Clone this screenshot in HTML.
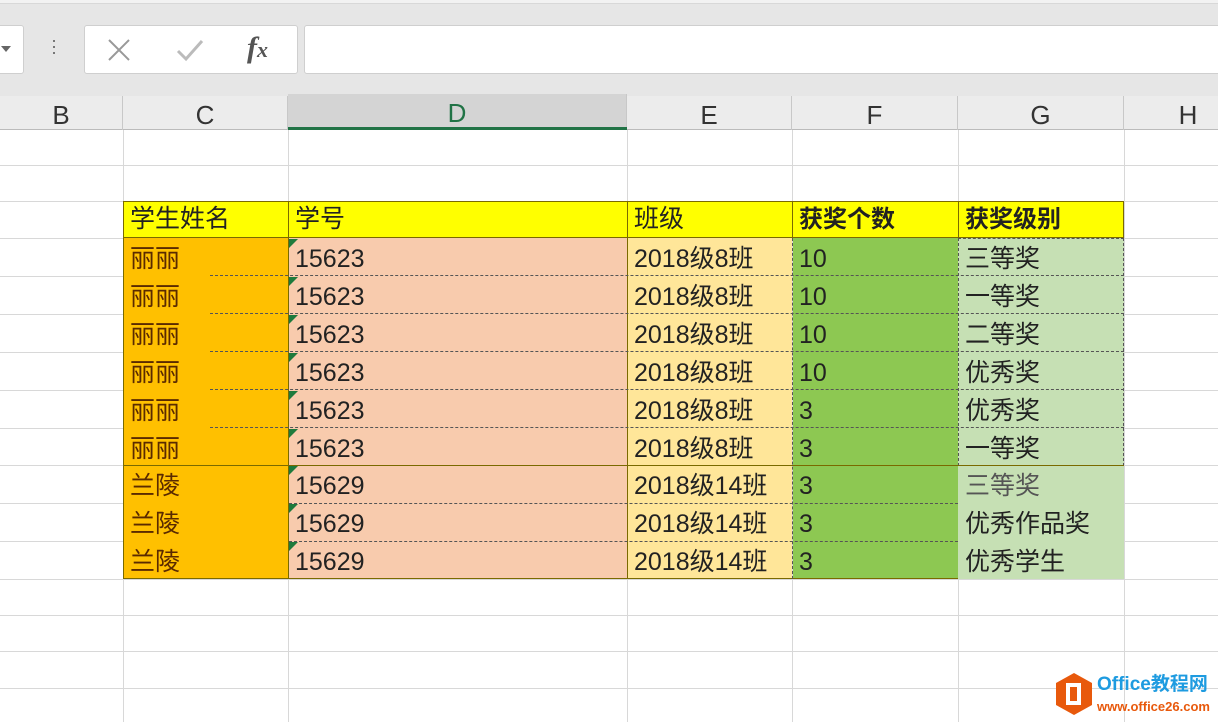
<!DOCTYPE html>
<html><head><meta charset="utf-8"><style>
*{margin:0;padding:0;box-sizing:border-box}
body{width:1218px;height:722px;overflow:hidden;background:#fff;position:relative;font-family:"Liberation Sans","Noto Sans CJK SC",sans-serif;color:#222}
.a{position:absolute}
.hl{position:absolute;left:0;width:1218px;height:1px;background:#d8d8d8}
.vl{position:absolute;top:130px;width:1px;height:592px;background:#d8d8d8}
.c{position:absolute;font-size:25px;line-height:41px;padding-left:7px;white-space:nowrap;overflow:hidden}
.ch{position:absolute;top:96px;height:34px;line-height:38px;text-align:center;font-size:26px;color:#333;border-right:1px solid #c8c8c8}
.tri{position:absolute;left:0;top:0;width:0;height:0;border-top:9px solid #1e7a3c;border-right:9px solid transparent}
</style></head><body>
<div class="a" style="left:0;top:0;width:1218px;height:96px;background:#e6e6e6"></div>
<div class="a" style="left:0;top:0;width:1218px;height:4px;background:#f2f2f2;border-bottom:1px solid #d8d8d8"></div>
<div class="a" style="left:-5px;top:25px;width:29px;height:49px;background:#fff;border:1px solid #cfcfcf;border-radius:3px"></div>
<div class="a" style="left:1px;top:46px;width:0;height:0;border-left:5px solid transparent;border-right:5px solid transparent;border-top:6px solid #666"></div>
<div class="a" style="left:53px;top:40px;width:2px;height:2px;background:#777;box-shadow:0 6px 0 #777,0 12px 0 #777"></div>
<div class="a" style="left:84px;top:25px;width:214px;height:49px;background:#fff;border:1px solid #cfcfcf;border-radius:3px"></div>
<svg class="a" style="left:107px;top:38px" width="24" height="24"><path d="M2 2L22 22M22 2L2 22" stroke="#999" stroke-width="2"/></svg>
<svg class="a" style="left:176px;top:38px" width="28" height="24"><path d="M2 13L10 21L26 3" stroke="#bbb" stroke-width="3" fill="none"/></svg>
<div class="a" style="left:247px;top:30px;font-size:30px;color:#555;font-style:italic;font-family:'Liberation Serif',serif;line-height:36px;font-weight:bold">f<span style="font-size:22px">x</span></div>
<div class="a" style="left:304px;top:25px;width:930px;height:49px;background:#fff;border:1px solid #cfcfcf;border-radius:3px"></div>
<div class="a" style="left:0;top:96px;width:1218px;height:34px;background:#ececec;border-bottom:1px solid #bbb"></div>
<div class="a" style="left:288px;top:94px;width:339px;height:36px;background:#d4d4d4;border-bottom:3px solid #217346"></div>
<div class="ch" style="left:0;width:123px">B</div>
<div class="ch" style="left:123px;width:165px">C</div>
<div class="ch" style="left:288px;width:339px;color:#217346;top:94px;height:33px">D</div>
<div class="ch" style="left:627px;width:165px">E</div>
<div class="ch" style="left:792px;width:166px">F</div>
<div class="ch" style="left:958px;width:166px">G</div>
<div class="ch" style="left:1124px;width:128px;border:none">H</div>
<div class="hl" style="top:165px"></div><div class="hl" style="top:201px"></div>
<div class="hl" style="top:238px"></div><div class="hl" style="top:276px"></div><div class="hl" style="top:314px"></div><div class="hl" style="top:352px"></div><div class="hl" style="top:390px"></div><div class="hl" style="top:428px"></div><div class="hl" style="top:465px"></div><div class="hl" style="top:503px"></div><div class="hl" style="top:541px"></div>
<div class="hl" style="top:579px"></div><div class="hl" style="top:615px"></div><div class="hl" style="top:651px"></div><div class="hl" style="top:688px"></div>
<div class="vl" style="left:123px"></div><div class="vl" style="left:288px"></div><div class="vl" style="left:627px"></div><div class="vl" style="left:792px"></div><div class="vl" style="left:958px"></div><div class="vl" style="left:1124px"></div>
<div class="a" style="left:123px;top:201px;width:1001px;height:37px;background:#ffff00;border:1px solid #7a6a00"></div>
<div class="a" style="left:288px;top:201px;width:1px;height:378px;background:#7a6a00"></div>
<div class="a" style="left:627px;top:201px;width:1px;height:378px;background:#7a6a00"></div>
<div class="a" style="left:792px;top:201px;width:1px;height:37px;background:#7a6a00"></div>
<div class="a" style="left:958px;top:201px;width:1px;height:37px;background:#7a6a00"></div>
<div class="c" style="left:123px;top:199px">学生姓名</div>
<div class="c" style="left:288px;top:199px">学号</div>
<div class="c" style="left:627px;top:199px">班级</div>
<div class="c" style="left:792px;top:199px;font-weight:bold;font-size:24px">获奖个数</div>
<div class="c" style="left:958px;top:199px;font-weight:bold;font-size:24px">获奖级别</div>
<div class="a" style="left:124px;top:238px;width:164px;height:341px;background:#ffc000"></div>
<div class="a" style="left:289px;top:238px;width:338px;height:341px;background:#f8cbad"></div>
<div class="a" style="left:628px;top:238px;width:164px;height:341px;background:#ffe699"></div>
<div class="a" style="left:793px;top:238px;width:165px;height:341px;background:#8dc852"></div>
<div class="a" style="left:958px;top:238px;width:166px;height:341px;background:#c6e0b4"></div>
<div class="a" style="left:123px;top:238px;width:1px;height:341px;background:#7a6a00"></div>
<div class="a" style="left:123px;top:578px;width:835px;height:1px;background:#7a6a00"></div>
<div class="a" style="left:958px;top:238px;width:166px;height:228px;border:1px dashed #555"></div>
<div class="a" style="left:792px;top:238px;width:0;height:341px;border-left:1px dashed #555"></div>
<div class="a" style="left:210px;top:275px;width:914px;border-top:1px dashed #555"></div>
<div class="a" style="left:210px;top:313px;width:914px;border-top:1px dashed #555"></div>
<div class="a" style="left:210px;top:351px;width:914px;border-top:1px dashed #555"></div>
<div class="a" style="left:210px;top:389px;width:914px;border-top:1px dashed #555"></div>
<div class="a" style="left:210px;top:427px;width:914px;border-top:1px dashed #555"></div>
<div class="a" style="left:124px;top:465px;width:1000px;border-top:1px solid #7a6a00"></div>
<div class="a" style="left:289px;top:503px;width:669px;border-top:1px dashed #555"></div>
<div class="a" style="left:289px;top:541px;width:669px;border-top:1px dashed #555"></div>
<div class="c" style="left:123px;top:239px;color:#5a2a00">丽丽</div><div class="a" style="left:289px;top:239px"><div class="tri"></div></div><div class="c" style="left:288px;top:239px">15623</div><div class="c" style="left:627px;top:239px">2018级8班</div><div class="c" style="left:792px;top:239px">10</div><div class="c" style="left:958px;top:239px">三等奖</div>
<div class="c" style="left:123px;top:277px;color:#5a2a00">丽丽</div><div class="a" style="left:289px;top:277px"><div class="tri"></div></div><div class="c" style="left:288px;top:277px">15623</div><div class="c" style="left:627px;top:277px">2018级8班</div><div class="c" style="left:792px;top:277px">10</div><div class="c" style="left:958px;top:277px">一等奖</div>
<div class="c" style="left:123px;top:315px;color:#5a2a00">丽丽</div><div class="a" style="left:289px;top:315px"><div class="tri"></div></div><div class="c" style="left:288px;top:315px">15623</div><div class="c" style="left:627px;top:315px">2018级8班</div><div class="c" style="left:792px;top:315px">10</div><div class="c" style="left:958px;top:315px">二等奖</div>
<div class="c" style="left:123px;top:353px;color:#5a2a00">丽丽</div><div class="a" style="left:289px;top:353px"><div class="tri"></div></div><div class="c" style="left:288px;top:353px">15623</div><div class="c" style="left:627px;top:353px">2018级8班</div><div class="c" style="left:792px;top:353px">10</div><div class="c" style="left:958px;top:353px">优秀奖</div>
<div class="c" style="left:123px;top:391px;color:#5a2a00">丽丽</div><div class="a" style="left:289px;top:391px"><div class="tri"></div></div><div class="c" style="left:288px;top:391px">15623</div><div class="c" style="left:627px;top:391px">2018级8班</div><div class="c" style="left:792px;top:391px">3</div><div class="c" style="left:958px;top:391px">优秀奖</div>
<div class="c" style="left:123px;top:429px;color:#5a2a00">丽丽</div><div class="a" style="left:289px;top:429px"><div class="tri"></div></div><div class="c" style="left:288px;top:429px">15623</div><div class="c" style="left:627px;top:429px">2018级8班</div><div class="c" style="left:792px;top:429px">3</div><div class="c" style="left:958px;top:429px">一等奖</div>
<div class="c" style="left:123px;top:466px;color:#5a2a00">兰陵</div><div class="a" style="left:289px;top:466px"><div class="tri"></div></div><div class="c" style="left:288px;top:466px">15629</div><div class="c" style="left:627px;top:466px">2018级14班</div><div class="c" style="left:792px;top:466px">3</div><div class="c" style="left:958px;top:466px;color:#555">三等奖</div>
<div class="c" style="left:123px;top:504px;color:#5a2a00">兰陵</div><div class="a" style="left:289px;top:504px"><div class="tri"></div></div><div class="c" style="left:288px;top:504px">15629</div><div class="c" style="left:627px;top:504px">2018级14班</div><div class="c" style="left:792px;top:504px">3</div><div class="c" style="left:958px;top:504px">优秀作品奖</div>
<div class="c" style="left:123px;top:542px;color:#5a2a00">兰陵</div><div class="a" style="left:289px;top:542px"><div class="tri"></div></div><div class="c" style="left:288px;top:542px">15629</div><div class="c" style="left:627px;top:542px">2018级14班</div><div class="c" style="left:792px;top:542px">3</div><div class="c" style="left:958px;top:542px">优秀学生</div>
<svg class="a" style="left:1054px;top:672px" width="40" height="44" viewBox="0 0 40 44"><polygon points="20,1 38,11 38,33 20,43 2,33 2,11" fill="#e8590c"/><rect x="12" y="11" width="15" height="22" fill="#fff"/><rect x="16" y="15" width="7" height="14" fill="#e8590c"/></svg>
<div class="a" style="left:1097px;top:674px;font-size:19px;font-weight:bold;color:#1e9be0;line-height:22px;white-space:nowrap">Office教程网</div>
<div class="a" style="left:1097px;top:699px;font-size:13px;font-weight:bold;color:#e8590c;line-height:16px;white-space:nowrap">www.office26.com</div>
</body></html>
